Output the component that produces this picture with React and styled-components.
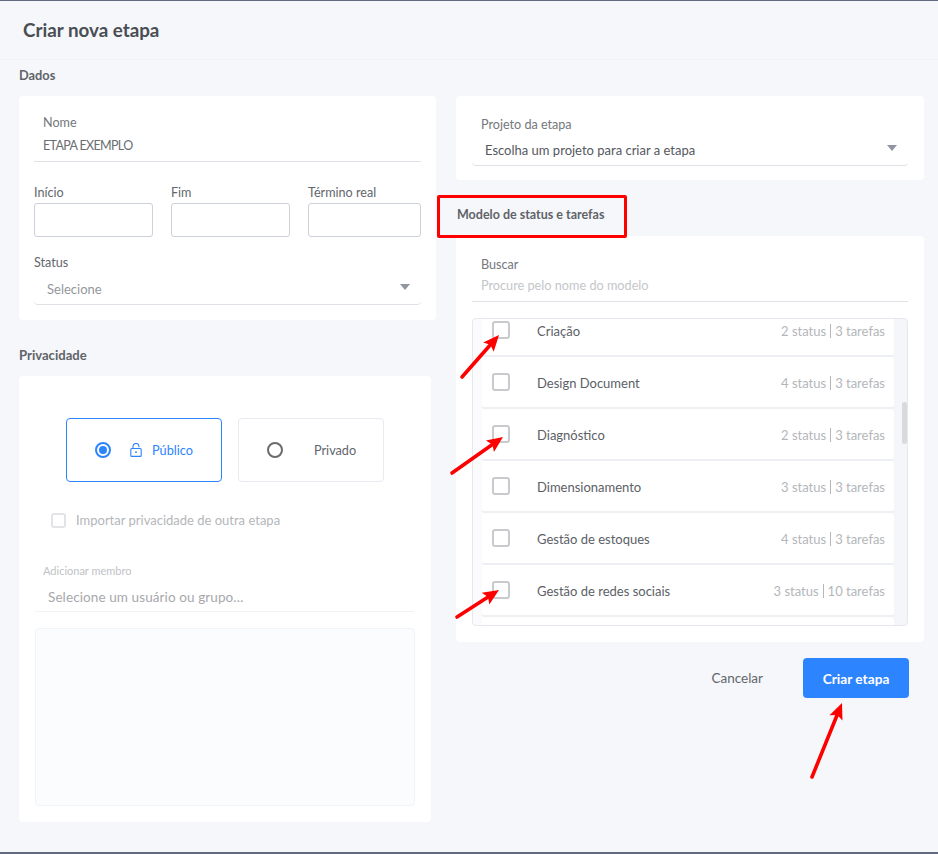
import React from "react"
import styled, { createGlobalStyle } from "styled-components"

const GlobalStyle = createGlobalStyle`
  html, body {
    margin: 0;
    padding: 0;
    background: #f5f7fb;
  }
  * {
    box-sizing: border-box;
  }
`

const Page = styled.div`
  position: relative;
  width: 938px;
  height: 854px;
  overflow: hidden;
  background: #f5f7fb;
  border-top: 1px solid #5f6b7c;
  border-bottom: 2px solid #5f6b7c;
  font-family: "Lato", "Liberation Sans", sans-serif;
  font-size: 13px;
  color: #5c6066;
`

const Header = styled.div`
  height: 59px;
  padding: 17px 23px 0;
  border-bottom: 1px solid #f0f2f6;
`

const Title = styled.h1`
  margin: 0;
  font-size: 18.8px;
  line-height: 24px;
  font-weight: 700;
  color: #4a4e54;
`

const Columns = styled.div`
  display: grid;
  grid-template-columns: 417px 468px;
  gap: 20px;
  padding: 0 14px 0 19px;
`

const Column = styled.div`
  display: flex;
  flex-direction: column;
`

const SectionTitle = styled.h2`
  margin: 0;
  height: ${(p) => p.$height || 36}px;
  padding-top: ${(p) => p.$top || 7}px;
  padding-left: ${(p) => p.$indent || 0}px;
  font-size: ${(p) => p.$size || 12.8}px;
  line-height: 16px;
  font-weight: 700;
  color: #5f6368;
`

const Card = styled.div`
  background: #fff;
  border-radius: 4px;
  width: ${(p) => p.$width || "100%"};
  height: ${(p) => p.$height}px;
  padding: ${(p) => p.$padding};
`

const Label = styled.div`
  height: 16px;
  margin-top: ${(p) => p.$top || 0}px;
  padding-left: ${(p) => p.$indent || 0}px;
  font-size: ${(p) => p.$size || 12.6}px;
  line-height: ${(p) => (p.$size ? 16 : 18)}px;
  color: ${(p) => p.$color || "#62666c"};
`

const UnderlineField = styled.div`
  position: relative;
  height: ${(p) => p.$height}px;
  padding: ${(p) => p.$padding};
  border-bottom: 1px solid ${(p) => p.$line || "#dfe1e6"};
  border-radius: 0 0 ${(p) => p.$round || 0}px ${(p) => p.$round || 0}px;
  font-size: ${(p) => p.$size || 13}px;
  letter-spacing: ${(p) => p.$spacing || 0}px;
  line-height: 18px;
  color: ${(p) => p.$color || "#62666c"};
`

const Caret = styled.span`
  position: absolute;
  top: ${(p) => p.$top}px;
  right: 11px;
  width: 0;
  height: 0;
  border-left: 5px solid transparent;
  border-right: 5px solid transparent;
  border-top: 6px solid #8f96a1;
`

const DateRow = styled.div`
  display: grid;
  grid-template-columns: 119px 119px 113px;
  gap: 18px;
  margin-top: 22px;
`

const DateInput = styled.div`
  height: 34px;
  margin-top: 3px;
  border: 1px solid #ccd0d8;
  border-radius: 3px;
`

const RadioRow = styled.div`
  display: flex;
  gap: 16px;
  padding-left: 47px;
`

const RadioCard = styled.div`
  display: flex;
  align-items: center;
  width: ${(p) => p.$width}px;
  height: 64px;
  padding-left: 28px;
  background: #fff;
  border: 1px solid ${(p) => (p.$active ? "#2d84ff" : "#e8eaf0")};
  border-radius: 4px;
  font-size: 12.7px;
  color: ${(p) => (p.$active ? "#2d84ff" : "#62666c")};
`

const RadioDot = styled.span`
  flex: none;
  width: 16px;
  height: 16px;
  border-radius: 50%;
  border: 2px solid ${(p) => (p.$active ? "#2d84ff" : "#6b6b6b")};
  display: flex;
  align-items: center;
  justify-content: center;

  &::after {
    content: "";
    display: ${(p) => (p.$active ? "block" : "none")};
    width: 8px;
    height: 8px;
    border-radius: 50%;
    background: #2d84ff;
  }
`

const LockIcon = styled.svg`
  flex: none;
  margin-left: 19px;
  width: 12px;
  height: 14px;
`

const RadioText = styled.span`
  margin-left: ${(p) => p.$gap}px;
`

const CheckBox = styled.span`
  flex: none;
  display: block;
  width: ${(p) => p.$size}px;
  height: ${(p) => p.$size}px;
  margin-top: ${(p) => p.$lift || 0}px;
  border: 2px solid ${(p) => p.$color};
  border-radius: 3px;
  background: #fff;
`

const ImportRow = styled.div`
  display: flex;
  align-items: center;
  gap: 10px;
  margin-top: 30px;
  padding-left: 32px;
  color: #b4b6ba;
`

const MemberField = styled.div`
  margin: 35px 17px 0 16px;
`

const MemberBox = styled.div`
  height: 178px;
  margin: 16px 16px 0;
  background: #fbfcfe;
  border: 1px solid #f2f3f7;
  border-radius: 4px;
`

const ModelList = styled.div`
  height: 308px;
  margin-top: 16px;
  padding: 0 13px 0 9px;
  position: relative;
  overflow: hidden;
  background: linear-gradient(to right, #fbfbfd 9px, #fff 9px, #fff 420px, #f5f6f9 420px);
  border: 1px solid #e6e8ed;
  border-radius: 4px;
`

const ModelTrack = styled.div`
  display: flex;
  flex-direction: column;
  gap: 4px;
  margin-top: -12px;
`

const ModelRow = styled.div`
  flex: none;
  display: flex;
  align-items: center;
  height: 48px;
  padding: 0 9px 0 10px;
  background: #fff;
  box-shadow: 0 2px 0 #eeeff3;
  border-radius: 2px;
`

const ModelName = styled.span`
  flex: 1;
  margin-left: 27px;
  color: #5c6066;
`

const ModelInfo = styled.span`
  display: flex;
  align-items: center;
  color: #b4b6ba;
`

const InfoDivider = styled.i`
  display: block;
  width: 1px;
  height: 14px;
  margin: 0 4px;
  background: #b4b6ba;
`

const ScrollThumb = styled.div`
  position: absolute;
  top: 83px;
  right: 0;
  width: 5px;
  height: 42px;
  border-radius: 3px;
  background: #d9dadd;
`

const Footer = styled.div`
  display: flex;
  align-items: center;
  justify-content: flex-end;
  margin-top: 16px;
  padding-right: 15px;
`

const CancelButton = styled.button`
  border: 0;
  padding: 0;
  margin-right: 40px;
  background: none;
  font: inherit;
  font-size: 13.5px;
  color: #62666c;
`

const SubmitButton = styled.button`
  width: 106px;
  height: 40px;
  border: 0;
  border-radius: 4px;
  background: #2d84ff;
  color: #fff;
  font: inherit;
  font-size: 13.7px;
  font-weight: 700;
`

const Highlight = styled.div`
  position: absolute;
  left: 437px;
  top: 194px;
  width: 190px;
  height: 43px;
  border: 3px solid #fe0000;
  border-radius: 2px;
`

const Arrows = styled.svg`
  position: absolute;
  left: 0;
  top: -1px;
  width: 938px;
  height: 854px;
  pointer-events: none;
`

const models = [
  ["Criação", "2 status", "3 tarefas"],
  ["Design Document", "4 status", "3 tarefas"],
  ["Diagnóstico", "2 status", "3 tarefas"],
  ["Dimensionamento", "3 status", "3 tarefas"],
  ["Gestão de estoques", "4 status", "3 tarefas"],
  ["Gestão de redes sociais", "3 status", "10 tarefas"],
  ["", "", ""],
]

// tail x/y, tip x/y
const arrowList = [
  [462, 377, 499, 335],
  [452, 473, 503, 437],
  [457, 617, 499, 590],
  [812, 777, 842, 703],
]

const Arrow = ({ from, to }) => {
  const angle = Math.atan2(to[1] - from[1], to[0] - from[0])
  const ux = Math.cos(angle)
  const uy = Math.sin(angle)
  const nx = -uy * 7
  const ny = ux * 7
  const back = [to[0] - ux * 16, to[1] - uy * 16]
  const notch = [to[0] - ux * 13, to[1] - uy * 13]
  const head = [
    `${to[0]},${to[1]}`,
    `${back[0] + nx},${back[1] + ny}`,
    `${notch[0]},${notch[1]}`,
    `${back[0] - nx},${back[1] - ny}`,
  ].join(" ")
  return (
    <g>
      <line x1={from[0]} y1={from[1]} x2={notch[0]} y2={notch[1]} stroke="#fe0000" strokeWidth="3.6" strokeLinecap="round" />
      <polygon points={head} fill="#fe0000" />
    </g>
  )
}

const App = () => {
  return (
    <Page>
      <GlobalStyle />
      <Header>
        <Title>Criar nova etapa</Title>
      </Header>
      <Columns>
        <Column>
          <SectionTitle>Dados</SectionTitle>
          <Card $height={224} $padding="18px 15px 0">
            <Label $indent={9} $color="#74777c">Nome</Label>
            <UnderlineField $height={32} $padding="7px 0 0 9px" $size={12.5} $spacing={-0.65} $color="#6a6d72">
              ETAPA EXEMPLO
            </UnderlineField>
            <DateRow>
              <div>
                <Label>Início</Label>
                <DateInput />
              </div>
              <div>
                <Label>Fim</Label>
                <DateInput />
              </div>
              <div>
                <Label>Término real</Label>
                <DateInput />
              </div>
            </DateRow>
            <Label $top={17}>Status</Label>
            <UnderlineField $height={35} $padding="10px 0 0 13px" $color="#94979c" $round={4}>
              Selecione
              <Caret $top={14} />
            </UnderlineField>
          </Card>
          <SectionTitle $height={56} $top={27} $size={13.1}>Privacidade</SectionTitle>
          <Card $width="412px" $height={446} $padding="42px 0 0">
            <RadioRow>
              <RadioCard $width={156} $active>
                <RadioDot $active />
                <LockIcon viewBox="0 0 12 14" fill="none" stroke="#2d84ff" strokeWidth="1.1">
                  <rect x="0.8" y="5.5" width="10.4" height="7.9" rx="1" />
                  <path d="M3 5.5V3.4a3 3 0 0 1 6 0v0.8" />
                  <circle cx="6" cy="9.2" r="0.9" fill="#2d84ff" stroke="none" />
                </LockIcon>
                <RadioText $gap={10}>Público</RadioText>
              </RadioCard>
              <RadioCard $width={146}>
                <RadioDot />
                <RadioText $gap={31}>Privado</RadioText>
              </RadioCard>
            </RadioRow>
            <ImportRow>
              <CheckBox $size={15} $color="#e2e3e6" />
              Importar privacidade de outra etapa
            </ImportRow>
            <MemberField>
              <Label $size={11} $color="#c0c2c6" $indent={8}>Adicionar membro</Label>
              <UnderlineField $height={33} $padding="9px 0 0 13px" $size={13.5} $spacing={0.1} $color="#a6a8ac" $line="#f1f2f5">
                Selecione um usuário ou grupo…
              </UnderlineField>
            </MemberField>
            <MemberBox />
          </Card>
        </Column>
        <Column>
          <SectionTitle />
          <Card $height={84} $padding="20px 16px 0 16px">
            <Label $indent={9} $color="#74777c">Projeto da etapa</Label>
            <UnderlineField $height={34} $padding="9px 0 0 13px" $color="#54585e" $round={4}>
              Escolha um projeto para criar a etapa
              <Caret $top={13} />
            </UnderlineField>
          </Card>
          <SectionTitle $height={56} $top={27} $indent={1} $size={12.5}>Modelo de status e tarefas</SectionTitle>
          <Card $height={406} $padding="20px 16px 0">
            <Label $indent={9} $color="#74777c">Buscar</Label>
            <UnderlineField $height={30} $padding="4px 0 0 9px" $size={12.7} $color="#c4c6ca">
              Procure pelo nome do modelo
            </UnderlineField>
            <ModelList>
              <ModelTrack>
                {models.map(([name, status, tasks], i) => (
                  <ModelRow key={i}>
                    {name && <CheckBox $size={18} $lift={-2} $color="#c9cacd" />}
                    <ModelName>{name}</ModelName>
                    {name && (
                      <ModelInfo>
                        {status}
                        <InfoDivider />
                        {tasks}
                      </ModelInfo>
                    )}
                  </ModelRow>
                ))}
              </ModelTrack>
              <ScrollThumb />
            </ModelList>
          </Card>
          <Footer>
            <CancelButton>Cancelar</CancelButton>
            <SubmitButton>Criar etapa</SubmitButton>
          </Footer>
        </Column>
      </Columns>
      <Highlight />
      <Arrows viewBox="0 0 938 854">
        {arrowList.map(([x1, y1, x2, y2], i) => (
          <Arrow key={i} from={[x1, y1]} to={[x2, y2]} />
        ))}
      </Arrows>
    </Page>
  )
}

export default App
